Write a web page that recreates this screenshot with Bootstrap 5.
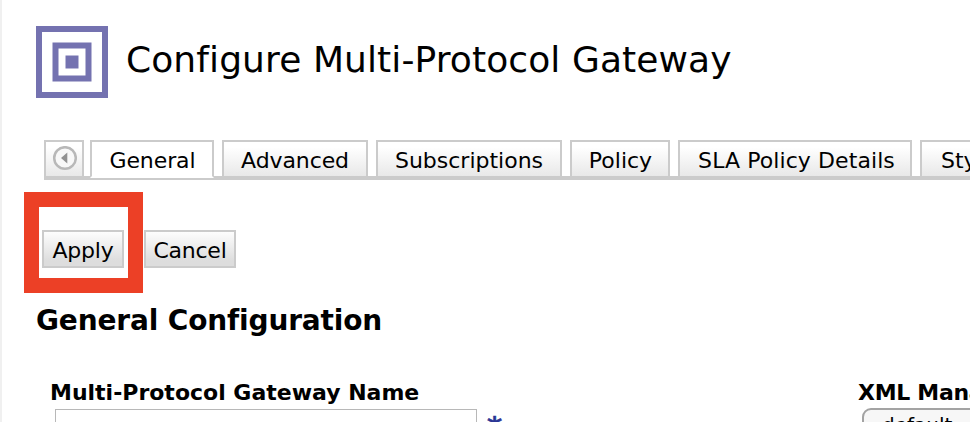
<!DOCTYPE html>
<html lang="en">
<head>
<meta charset="utf-8">
<meta name="viewport" content="width=device-width, initial-scale=1">
<title>Configure Multi-Protocol Gateway</title>
<link href="https://cdn.jsdelivr.net/npm/bootstrap@5.3.0/dist/css/bootstrap.min.css" rel="stylesheet">
<style>
body{font-family:Verdana,"DejaVu Sans",sans-serif;font-size:22px;color:#000;background:#fff;height:422px}
.page{height:422px;border-left:2px solid #f0f0f0;padding:26px 0 0 34px}
.page-title{font-size:36px;line-height:40px;margin:0 0 4px 18px;font-weight:400;letter-spacing:.1px}
.tabs{margin:42px 0 0 8px;height:40px;background:linear-gradient(#cbcbcb,#cbcbcb) bottom/100% 4px no-repeat;gap:8px}
.tab{height:38px;border:2px solid #cbcbcb;background:linear-gradient(#fff 15%,#e8e8e8);color:#000;line-height:36px;text-align:center;padding:1px 0 0;border-radius:0;flex:none;font-size:22px}
.tab.current{background:#fff;border-bottom-color:#fff;margin-left:-2px;padding-left:1px;letter-spacing:-.1px}
.w-prev{width:40px;padding:0}.w-general{width:124px}.w-advanced{width:146px;letter-spacing:-.1px}.w-subs{width:186px}.w-policy{width:100px;padding-left:1px}.w-sla{width:234px;letter-spacing:.08px;padding-left:3px}.w-style{width:180px;text-align:left;padding-left:19px}
.actions{margin:50px 0 0 6px;gap:20px}
.action{height:38px;border:2px solid #cbcbcb;border-radius:0;background:linear-gradient(#fdfdfd,#ddd 85%);color:#000;font-size:22px;line-height:36px;padding:1px 0 0;letter-spacing:-.25px}
.w-apply{width:82px}.w-cancel{width:92px}
.highlight{left:-18px;top:-38px;width:119px;height:101px;border:15px solid #ec4026;pointer-events:none}
.section-title{font-size:28px;line-height:34px;font-weight:700;margin:36px 0 0;letter-spacing:-.15px}
.fields{margin:39px 0 0 14px}
.field-main{width:808px}
.field-name{line-height:32px;font-weight:700;display:block}
.manager-name{letter-spacing:-.3px}
.name-box{width:422px;height:40px;border:1px solid #b8b8b8;border-radius:0;margin-left:5px;padding:0}
.required{color:#2b3595;font-size:29px;font-weight:700;line-height:36px;margin-left:10px;-webkit-text-stroke:.5px #2b3595}
.manager{width:200px;height:38px;border:2px solid #a3a3a3;border-radius:9px;background:#f7f7f7;margin:-1px 0 0 4px;padding-left:18px;font-size:20px;line-height:31px}
</style>
<script src="https://cdn.jsdelivr.net/npm/bootstrap@5.3.0/dist/js/bootstrap.bundle.min.js"></script>
</head>
<body class="overflow-hidden">
<main class="page overflow-hidden">
  <header class="d-flex align-items-center">
    <svg width="72" height="72" viewBox="0 0 72 72" class="flex-shrink-0" fill="none" stroke="#7472b0" stroke-width="6" aria-hidden="true">
      <path d="M3 3h66v66H3z"/><path d="M19.500 19.500h33v33h-33z"/><path d="M29.500 29.500h13v13h-13z" fill="#7472b0" stroke="none"/>
    </svg>
    <h1 class="page-title text-nowrap">Configure Multi-Protocol Gateway</h1>
  </header>
  <nav class="tabs d-flex text-nowrap">
    <button class="tab w-prev d-flex align-items-center justify-content-center" aria-label="Previous tabs">
      <svg width="26" height="26" viewBox="0 0 26 26"><circle cx="14" cy="12" r="10.800" fill="#f8f8f8" stroke="#b8b8b8" stroke-width="2.500"/><path d="M16.300 6.500v11L10 12z" fill="#929292"/></svg>
    </button>
    <button class="tab current w-general">General</button>
    <button class="tab w-advanced">Advanced</button>
    <button class="tab w-subs">Subscriptions</button>
    <button class="tab w-policy">Policy</button>
    <button class="tab w-sla">SLA Policy Details</button>
    <button class="tab w-style">Style</button>
  </nav>
  <div class="actions d-flex position-relative">
    <button class="action w-apply">Apply</button>
    <button class="action w-cancel">Cancel</button>
    <div class="highlight position-absolute"></div>
  </div>
  <h2 class="section-title">General Configuration</h2>
  <div class="fields d-flex text-nowrap">
    <div class="field-main flex-shrink-0">
      <label class="field-name" for="gateway">Multi-Protocol Gateway Name</label>
      <div class="d-flex"><input id="gateway" class="name-box" type="text"><span class="required">*</span></div>
    </div>
    <div class="flex-shrink-0">
      <span class="field-name manager-name">XML Manager</span>
      <div class="manager">default</div>
    </div>
  </div>
</main>
</body>
</html>
